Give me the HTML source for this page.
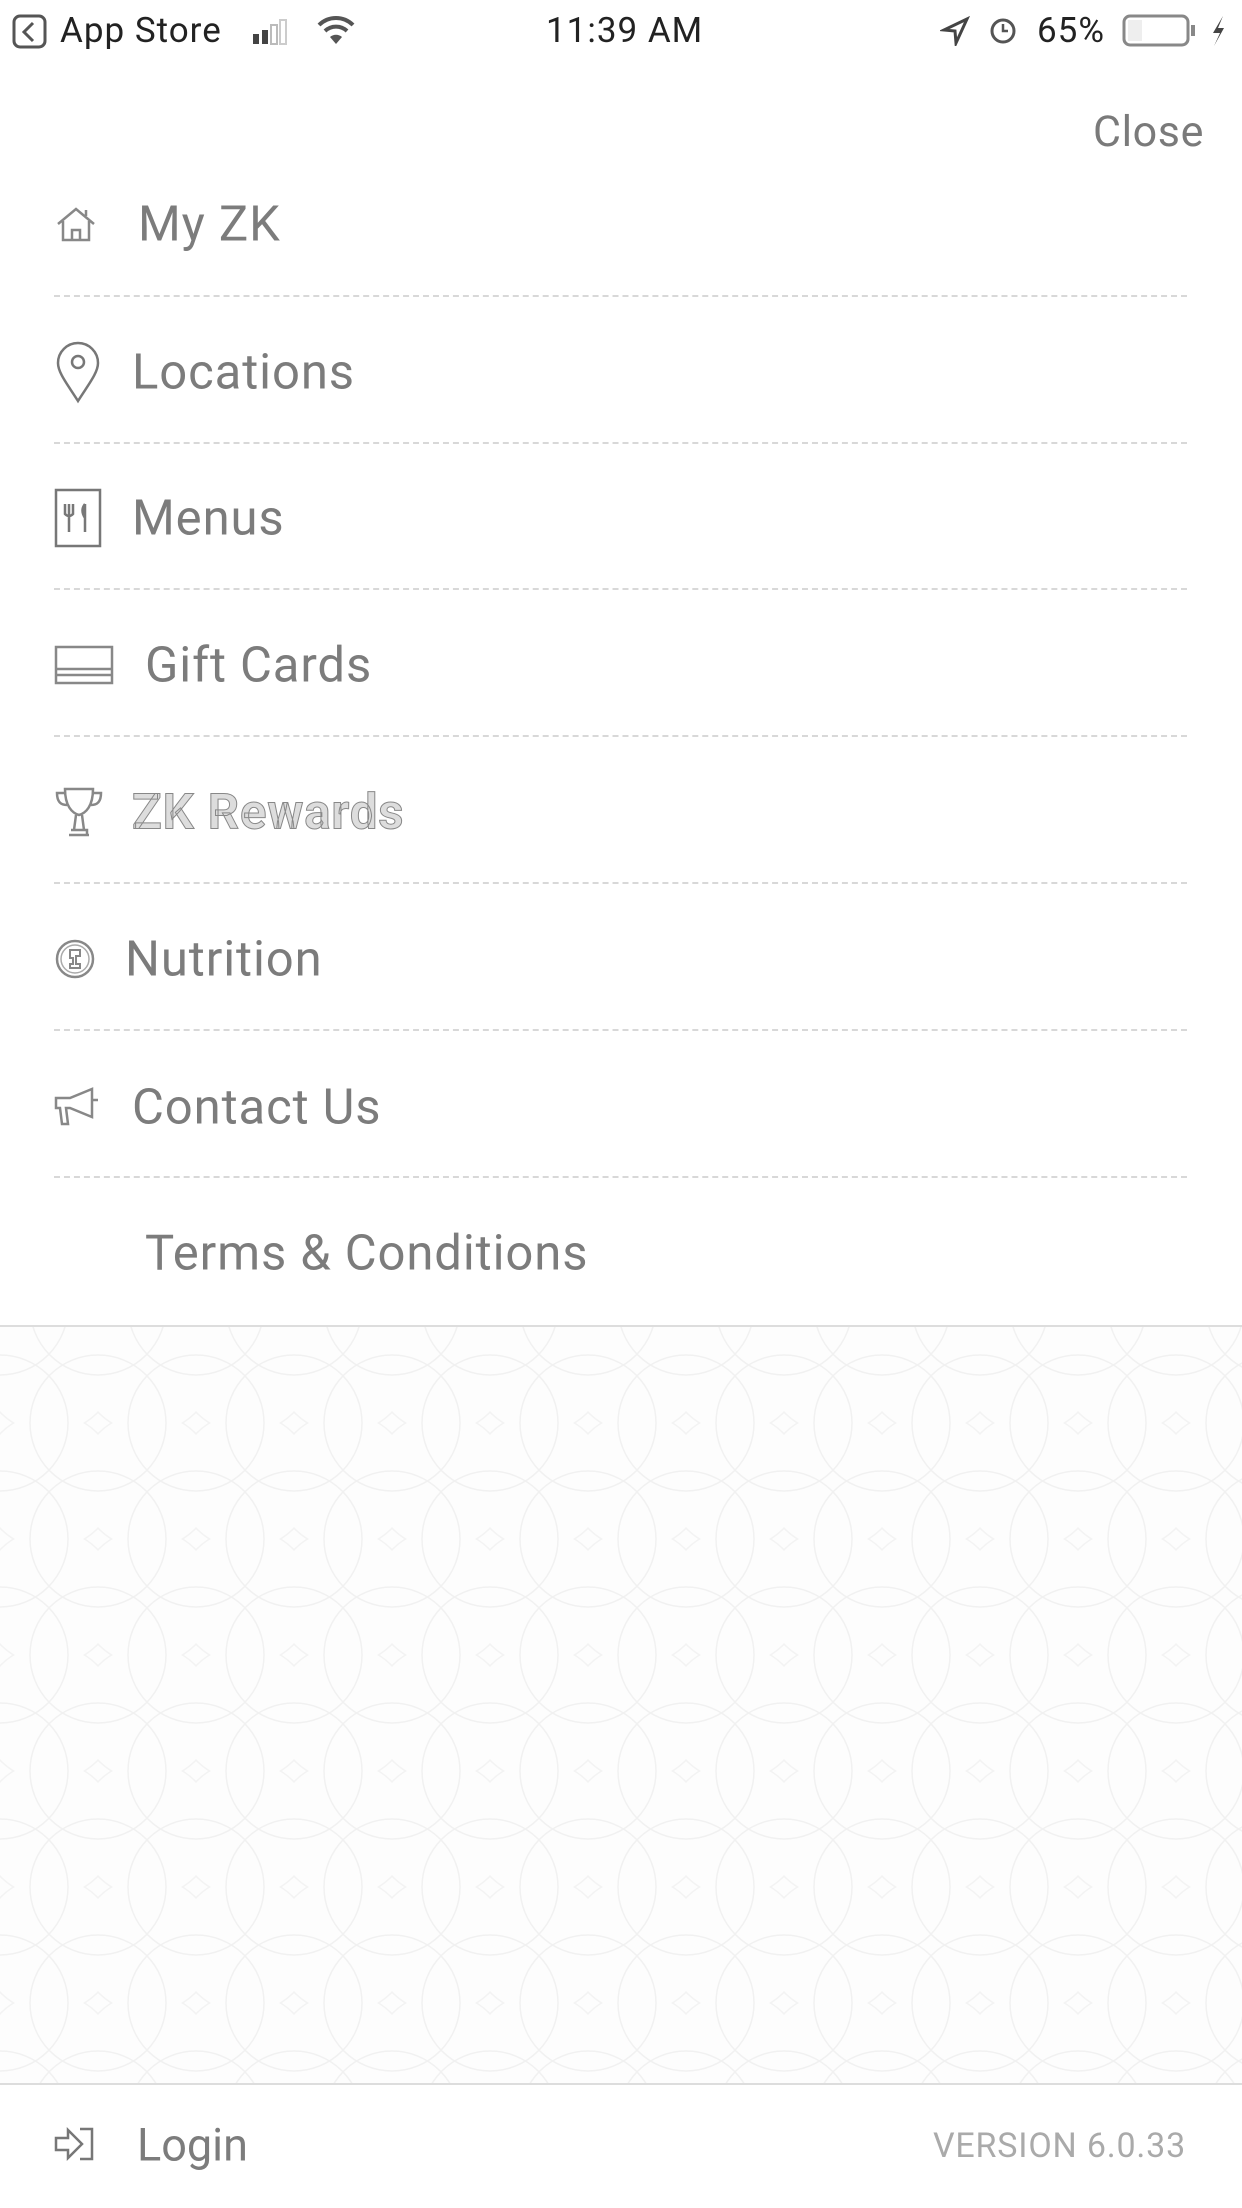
<!DOCTYPE html>
<html><head><meta charset="utf-8"><style>
*{margin:0;padding:0;box-sizing:border-box}
body{width:1242px;height:2208px;background:#fff;position:relative;overflow:hidden;font-family:"Roboto","Liberation Sans",sans-serif;color:#7a7a7a}
.abs{position:absolute}
.sb{font-size:35px;color:#222;top:10px;letter-spacing:1px}
.item{position:absolute;font-size:49px;letter-spacing:0.9px;color:#7c7c7c;line-height:1;transform:translateY(-50%)}
.dash{position:absolute;left:54px;width:1133px;height:0;border-top:2px dashed #d8d8d8}
.ic{position:absolute;left:54px;transform:translateY(-50%)}
</style></head><body>
<svg class="abs" style="left:12px;top:14px" width="36" height="36" viewBox="0 0 36 36"><rect x="2" y="2" width="31" height="31" rx="6" fill="none" stroke="#555" stroke-width="3"/><path d="M21 9 L12 18 L21 27" fill="none" stroke="#555" stroke-width="3"/></svg>
<div class="abs sb" style="left:60px">App Store</div>
<svg class="abs" style="left:252px;top:18px" width="50" height="28"><rect x="1" y="16" width="6" height="10" fill="#444"/><rect x="10" y="12" width="6" height="14" fill="#444"/><rect x="19" y="7" width="6" height="19" fill="none" stroke="#bbb" stroke-width="2"/><rect x="28" y="2" width="6" height="24" fill="none" stroke="#ccc" stroke-width="2"/></svg>
<svg class="abs" style="left:316px;top:14px" width="40" height="32" viewBox="0 0 40 32"><path d="M3 11 A24 24 0 0 1 37 11" fill="none" stroke="#555" stroke-width="4"/><path d="M9 17 A16 16 0 0 1 31 17" fill="none" stroke="#555" stroke-width="4"/><path d="M14 23 L20 30 L26 23 A9 9 0 0 0 14 23Z" fill="#555"/></svg>
<div class="abs sb" style="left:546px">11:39 AM</div>
<svg class="abs" style="left:940px;top:16px" width="30" height="30"><path d="M27 3 L4 14 L15 15 L16 27 Z" fill="none" stroke="#444" stroke-width="3"/></svg>
<svg class="abs" style="left:988px;top:14px" width="30" height="32"><circle cx="15" cy="17" r="11" fill="none" stroke="#555" stroke-width="3"/><path d="M15 10 V17 H20" stroke="#555" stroke-width="2.5" fill="none"/></svg>
<div class="abs sb" style="left:1037px">65%</div>
<svg class="abs" style="left:1122px;top:14px" width="80" height="34"><rect x="2" y="2" width="64" height="29" rx="6" fill="none" stroke="#888" stroke-width="3"/><rect x="6" y="6" width="14" height="21" fill="#eee"/><rect x="69" y="11" width="4" height="11" fill="#888"/></svg>
<svg class="abs" style="left:1208px;top:14px" width="20" height="34"><path d="M15 2 L5 19 H12 L6 32 L16 14 H10 Z" fill="#444"/></svg>

<div class="abs" style="right:38px;top:107px;font-size:43px;letter-spacing:0.6px;color:#7a7a7a">Close</div>

<svg class="ic" style="top:224px" width="44" height="40" viewBox="0 0 44 40"><path d="M4 20 L22 5 L40 20 M9 17 V36 H35 V17 M18 36 V26 H26 V36 M32 6 V12" fill="none" stroke="#888" stroke-width="2.5"/></svg>
<div class="item" style="left:138px;top:224px">My ZK</div>
<div class="dash" style="top:295px"></div>

<svg class="ic" style="top:372px" width="48" height="64" viewBox="0 0 48 64"><path d="M24 61 C14 45 4 33 4 23 A20 20 0 0 1 44 23 C44 33 34 45 24 61Z" fill="none" stroke="#777" stroke-width="2.5"/><circle cx="24" cy="22" r="6" fill="none" stroke="#777" stroke-width="2.5"/></svg>
<div class="item" style="left:132px;top:372px">Locations</div>
<div class="dash" style="top:442px"></div>

<svg class="ic" style="top:518px" width="48" height="60" viewBox="0 0 48 60"><rect x="2" y="2" width="44" height="56" fill="none" stroke="#777" stroke-width="2.5"/><path d="M15 16 V44 M11 16 V26 Q15 30 19 26 V16 M31 16 Q26 22 31 30 V44 M31 16 V44" fill="none" stroke="#777" stroke-width="2.5"/></svg>
<div class="item" style="left:132px;top:518px">Menus</div>
<div class="dash" style="top:588px"></div>

<svg class="ic" style="top:665px" width="60" height="40" viewBox="0 0 60 40"><rect x="2" y="2" width="56" height="36" fill="none" stroke="#888" stroke-width="2.5"/><path d="M2 24 H58 M2 30 H58" stroke="#888" stroke-width="2.5"/></svg>
<div class="item" style="left:145px;top:665px">Gift Cards</div>
<div class="dash" style="top:735px"></div>

<svg class="ic" style="top:812px" width="50" height="52" viewBox="0 0 50 52"><path d="M11 3 H39 C39 20 32 27 25 29 C18 27 11 20 11 3Z M11 7 H3 C3 17 8 19 13 19 M39 7 H47 C47 17 42 19 37 19 M22 29 L20 44 H30 L28 29 M15 49 H35 M17 44 H33 V49" fill="none" stroke="#888" stroke-width="2.5"/></svg>
<div class="item" style="left:132px;top:812px;-webkit-text-stroke:1px #888;font-weight:bold;color:#ddd">ZK Rewards</div>
<div class="dash" style="top:882px"></div>

<svg class="ic" style="top:959px" width="42" height="42" viewBox="0 0 42 42"><circle cx="21" cy="21" r="18" fill="none" stroke="#888" stroke-width="2.5"/><circle cx="21" cy="21" r="14" fill="none" stroke="#aaa" stroke-width="1.5"/><path d="M16 12 H26 V18 H22 V26 H26 V30 H16 V26 H19 V20 H16Z" fill="none" stroke="#888" stroke-width="2"/></svg>
<div class="item" style="left:125px;top:959px">Nutrition</div>
<div class="dash" style="top:1029px"></div>

<svg class="ic" style="top:1107px" width="48" height="42" viewBox="0 0 48 42"><path d="M2 12 H16 L38 3 V31 L16 22 H12 L14 38 H8 L6 22 H2Z M38 14 H44" fill="none" stroke="#888" stroke-width="2.5"/></svg>
<div class="item" style="left:132px;top:1107px">Contact Us</div>
<div class="dash" style="top:1176px"></div>

<div class="item" style="left:145px;top:1253px">Terms &amp; Conditions</div>

<div class="abs" style="left:0;top:1325px;width:1242px;height:2px;background:#ddd"></div>
<svg class="abs" style="left:0;top:1327px" width="1242" height="757">
<defs><pattern id="p" width="98" height="116" patternUnits="userSpaceOnUse" x="0" y="-20">
<circle cx="0" cy="0" r="68" fill="none" stroke="#f1f1f1" stroke-width="1.5"/><circle cx="98" cy="0" r="68" fill="none" stroke="#f1f1f1" stroke-width="1.5"/><circle cx="0" cy="116" r="68" fill="none" stroke="#f1f1f1" stroke-width="1.5"/><circle cx="98" cy="116" r="68" fill="none" stroke="#f1f1f1" stroke-width="1.5"/><circle cx="49" cy="58" r="68" fill="none" stroke="#f3f3f3" stroke-width="1.5"/></pattern></defs>
<rect width="1242" height="757" fill="#fdfdfd"/><rect width="1242" height="757" fill="url(#p)"/></svg>
<div class="abs" style="left:0;top:2083px;width:1242px;height:2px;background:#ddd"></div>

<svg class="abs" style="left:54px;top:2126px" width="42" height="36" viewBox="0 0 42 36"><path d="M2 12 H14 V4 L28 18 L14 32 V24 H2Z M26 3 H38 V33 H26" fill="none" stroke="#777" stroke-width="2.5"/></svg>
<div class="item" style="left:137px;top:2145px;font-size:45px;letter-spacing:0">Login</div>
<div class="abs" style="right:56px;top:2126px;font-size:34px;letter-spacing:0.8px;color:#aaa">VERSION 6.0.33</div>
</body></html>
